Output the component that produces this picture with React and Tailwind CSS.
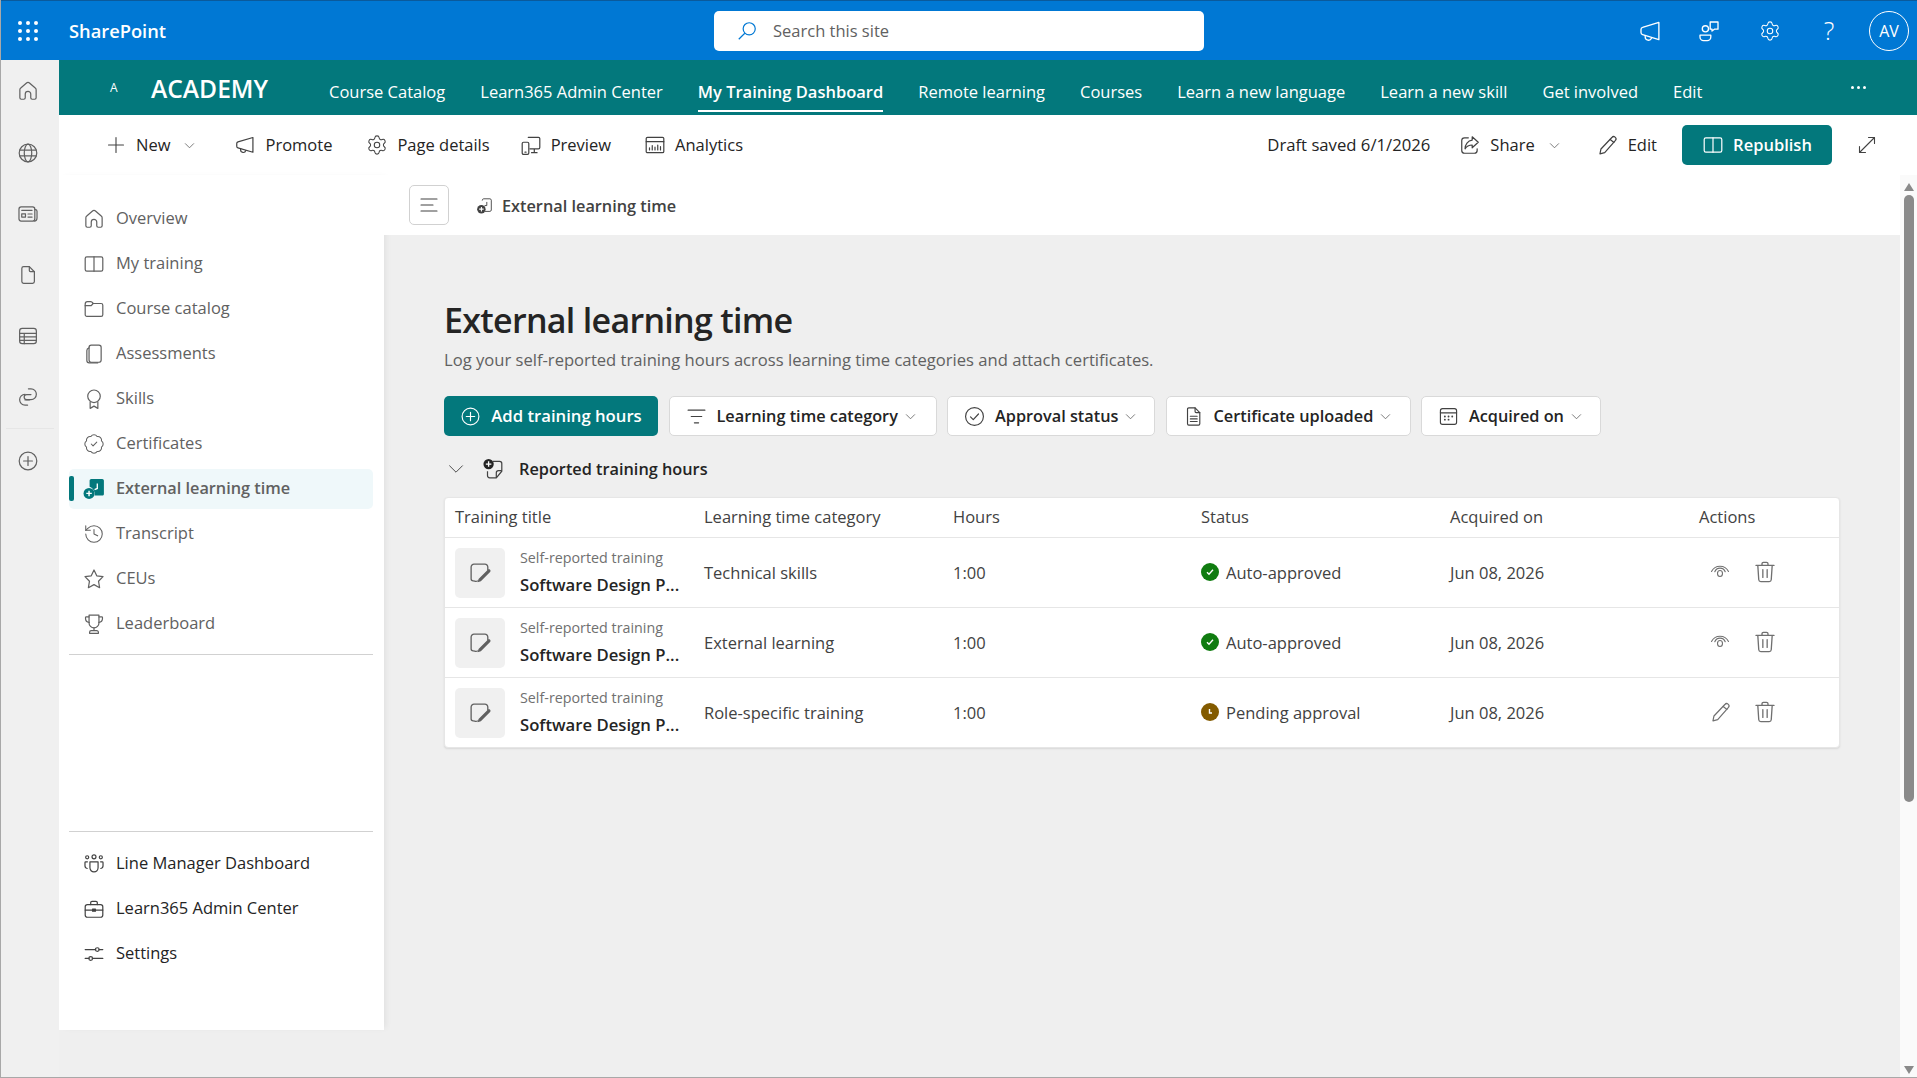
import { useState } from "react";
import { Settings, BadgeCheck, History as HistoryIcon } from "lucide-react";

const Ic = ({ size = 20, className = "", sw = 1.1, children, vb = 20 }) => (
  <svg width={size} height={size} viewBox={`0 0 ${vb} ${vb}`} fill="none" stroke="currentColor" strokeWidth={sw} strokeLinecap="round" strokeLinejoin="round" className={`shrink-0 ${className}`}>
    {children}
  </svg>
);

const Home = (p) => <Ic {...p}><path d="M8.4 2.9a2.4 2.4 0 0 1 3.2 0l5 4.3c.5.4.8 1 .8 1.7v7.3c0 .7-.6 1.3-1.3 1.3h-2.3c-.7 0-1.3-.6-1.3-1.3v-3.4a2.500 2.500 0 0 0-5 0v3.400c0 .7-.6 1.300-1.300 1.300H3.900c-.7 0-1.300-.6-1.300-1.300V8.900c0-.7.3-1.300.8-1.700z" /></Ic>;
const Globe = (p) => <Ic {...p}><circle cx="10" cy="10" r="8" /><ellipse cx="10" cy="10" rx="3.400" ry="8" /><path d="M2.400 7.400h15.200M2.400 12.600h15.200" /></Ic>;
const News = (p) => <Ic {...p}><rect x="1.800" y="3.600" width="14.400" height="12.800" rx="2" /><path d="M16.200 6h.4c.9 0 1.600.7 1.600 1.600v5.800c0 1.700-1 3-2.600 3" /><rect x="4.300" y="9.800" width="3.400" height="3" /><path d="M4.300 6.700h9.400M10 10h3.700M10 12.800h3.700" /></Ic>;
const FileI = (p) => <Ic {...p}><path d="M6 2.400h5.200L15.800 7v9c0 .9-.7 1.600-1.600 1.600H6c-.9 0-1.600-.7-1.600-1.600V4c0-.9.7-1.600 1.600-1.600z" /><path d="M11.200 2.400V6c0 .6.4 1 1 1h3.600" /></Ic>;
const Lists = (p) => <Ic {...p}><rect x="2.400" y="3" width="15.200" height="14" rx="2.400" /><path d="M2.400 7.600h15.200M2.400 10.800h15.200M2.400 14h15.200M6.600 7.600V17" /></Ic>;
const Loop = (p) => <Ic {...p}><path d="M10.400 2.600h2.300a4.900 4.900 0 0 1 0 9.800H8.800a2.300 2.300 0 0 1 0-4.600h3.900" /><path d="M9.600 17.400H7.300a4.900 4.900 0 0 1 0-9.800" /><path d="M7.300 12.700h3.900" /></Ic>;
const PlusCircle = (p) => <Ic {...p}><circle cx="10" cy="10" r="8" /><path d="M10 6v8M6 10h8" /></Ic>;
const Plus = (p) => <Ic {...p}><path d="M10 2.500v15M2.500 10h15" /></Ic>;
const Chevron = ({ size = 11, className = "" }) => <Ic size={size} className={className} vb={12} sw={0.9}><path d="M1.500 4l4.500 4.500L10.500 4" /></Ic>;
const Megaphone = (p) => <Ic {...p}><path d="M17.200 3.200v13.400L3.600 12.600c-.7-.2-1.100-.8-1.100-1.500V8.700c0-.7.4-1.300 1.100-1.500z" /><path d="M6 13.200v1.200a2.400 2.400 0 0 0 4.700.7" /></Ic>;
const Gear = ({ size = 20, className = "" }) => <Settings size={size} strokeWidth={1.15} className={`shrink-0 ${className}`} />;
const Preview = (p) => <Ic {...p}><path d="M7.500 3h9.300c.7 0 1.200.5 1.200 1.200v8.100c0 .7-.5 1.200-1.200 1.200H9M13 13.500v3.500M10.500 17h5" /><rect x="2" y="7.500" width="6" height="11" rx="1.200" /><path d="M4.500 16.500h1" /></Ic>;
const Analytics = (p) => <Ic {...p}><rect x="2" y="3" width="16" height="14" rx="1.200" /><path d="M2 7h16M5 14.500v-2M7.500 14.500v-4M10 14.500v-2.500M12.500 14.500V10M15 14.500v-3" /></Ic>;
const Share = (p) => <Ic {...p}><path d="M8.500 3.500H5c-1.400 0-2.500 1.100-2.500 2.500v9c0 1.400 1.100 2.500 2.500 2.500h9c1.400 0 2.500-1.100 2.500-2.500v-1.500" /><path d="M12 2.500l5.500 5-5.500 5V10c-3 0-5 1-6.500 3.500C5.500 9.500 8 6 12 5.500z" /></Ic>;
const Pencil = (p) => <Ic {...p}><path d="M13.500 3.200a2.100 2.100 0 0 1 3.300 2.600L7 17l-4.300 1 .9-4.400z" /><path d="M12 5l3.400 2.700" /></Ic>;
const BookI = (p) => <Ic {...p}><rect x="2" y="3.500" width="16" height="13" rx="1.500" /><path d="M10 3.500v13" /></Ic>;
const Expand = (p) => <Ic {...p}><path d="M11.500 2.500h6v6M17.500 2.500l-15 15M2.500 11.500v6h6" /></Ic>;
const Speak = (p) => <Ic {...p}><path d="M17.400 2.800v14.400L3.800 13c-.8-.2-1.300-.9-1.300-1.700V8.700c0-.8.500-1.500 1.300-1.700z" /><path d="M6 14v1a2.700 2.700 0 0 0 5.200 1" /></Ic>;
const Chat = (p) => <Ic {...p}><circle cx="7" cy="8.200" r="2.600" /><path d="M2.500 13.500h9v1.500a3 3 0 0 1-3 3h-3a3 3 0 0 1-3-3z" /><path d="M11 2.500h6.500v6h-3l-2 1.500V8.500H11z" /></Ic>;
const Folder = (p) => <Ic {...p}><path d="M2 5.500C2 4.100 2.800 3.200 4 3.200h2.800c.6 0 1 .2 1.400.6l1 1.200H16.500c.8 0 1.500.7 1.500 1.500v8.700c0 .8-.7 1.500-1.500 1.500h-13c-.8 0-1.500-.7-1.500-1.500z" /><path d="M2 7h5.500l1.700-2" /></Ic>;
const Pages = (p) => <Ic {...p}><rect x="5.500" y="2" width="11" height="15.500" rx="2" /><path d="M5.500 4.500c-1 .3-2 1-2 2.300v9c0 1.300 1 2.200 2.200 2.200h7.800" /></Ic>;
const Ribbon = (p) => <Ic {...p}><circle cx="10" cy="7.500" r="5.700" /><path d="M6.500 12.500v6l3.500-2 3.500 2v-6" /></Ic>;
const Cert = ({ size = 20, className = "" }) => <BadgeCheck size={size} strokeWidth={1.15} className={`shrink-0 ${className}`} />;
const History = ({ size = 20, className = "" }) => <HistoryIcon size={size} strokeWidth={1.15} className={`shrink-0 ${className}`} />;
const Star = (p) => <Ic {...p}><path d="M10 1.800l2.500 5.300 5.700.8-4.100 4.100 1 5.900-5.100-2.800-5.100 2.800 1-5.900L1.800 7.900l5.700-.8z" /></Ic>;
const Trophy = (p) => <Ic {...p}><path d="M5.500 2h9v7a4.500 4.500 0 0 1-9 0z" /><path d="M5.500 3.500H3a.7.7 0 0 0-.7.7V5a3.500 3.500 0 0 0 3.300 3.500M14.500 3.500H17c.4 0 .7.3.7.7V5a3.500 3.500 0 0 1-3.300 3.500M10 13.500V16M6 18.500v-1a1.500 1.500 0 0 1 1.500-1.500h5a1.500 1.500 0 0 1 1.500 1.500v1z" /></Ic>;
const Team = (p) => <Ic {...p}><circle cx="10" cy="3.500" r="1.800" /><circle cx="3.800" cy="3.900" r="1.400" /><circle cx="16.200" cy="3.900" r="1.400" /><path d="M6.300 8h7.400v5.500a3.700 3.700 0 0 1-7.400 0zM4 8H2.500c-.4 0-.7.3-.7.7v3c0 1.200.9 2.200 2 2.400M16 8h1.500c.4 0 .7.3.7.7v3c0 1.200-.9 2.200-2 2.400" /></Ic>;
const Briefcase = (p) => <Ic {...p}><rect x="2" y="6" width="16" height="11.500" rx="2" /><path d="M7 6V4.200C7 3.500 7.500 3 8.200 3h3.600c.7 0 1.200.5 1.200 1.200V6M2 11h6.500M11.500 11H18" /><rect x="8.700" y="10" width="2.600" height="2" fill="currentColor" /></Ic>;
const Sliders = (p) => <Ic {...p}><path d="M2 6h9.500M14.500 6H18M2 14h3.500M8.500 14H18" /><circle cx="13" cy="6" r="1.700" /><circle cx="7" cy="14" r="1.700" /></Ic>;
const MenuLines = (p) => <Ic {...p}><path d="M2 4h16M2 10h12M2 16h16" /></Ic>;
const Funnel = (p) => <Ic {...p}><path d="M2 4h16M5 10h10M8 16h4" /></Ic>;
const CheckCircle = (p) => <Ic {...p}><circle cx="10" cy="10" r="8.500" /><path d="M6.200 10.300l2.600 2.600 5-5.300" /></Ic>;
const Doc = (p) => <Ic {...p}><path d="M5.500 1.800h6L16 6.300V17c0 .7-.5 1.200-1.200 1.200H5.500c-.7 0-1.200-.5-1.200-1.200V3c0-.7.5-1.200 1.200-1.200z" /><path d="M11.500 1.800v3.500c0 .6.4 1 1 1H16M7 9.800h6.500M7 12.300h6.500M7 14.800h6.500" /></Ic>;
const Calendar = (p) => <Ic {...p}><rect x="2.300" y="2.500" width="15.400" height="15" rx="2" /><path d="M2.300 6.500h15.400" /><path d="M6.500 10h.1M10 10h.1M13.500 10h.1M6.500 13h.1M10 13h.1" strokeWidth="1.700" /></Ic>;
const Eye = (p) => <Ic {...p}><path d="M1.500 9.500a9.500 9.500 0 0 1 17 0" /><path d="M4.800 9.800a5.500 5.500 0 0 1 10.400 0" /><ellipse cx="10" cy="11.500" rx="2.500" ry="3" /></Ic>;
const Trash = (p) => <Ic {...p}><path d="M2.500 4.500h15M7.500 4.500V3.200c0-.7.5-1.200 1.200-1.200h2.600c.7 0 1.200.5 1.200 1.200v1.300M4 4.500l.8 12c.1 1 .9 1.500 1.700 1.500h7c.8 0 1.600-.5 1.700-1.500l.8-12M8.200 8v6.500M11.800 8v6.500" /></Ic>;
const NoteEdit = (p) => <Ic {...p}><path d="M16.500 7.500V5c0-1.300-1-2.400-2.400-2.400H5c-1.300 0-2.400 1.100-2.400 2.400v9.800c0 .9.7 1.700 1.700 1.700 1.400 0 2 1 3.500.2" /><path d="M18.400 9.100l-7.700 7.700-2.700.9.800-2.700 7.700-7.700c.5-.5 1.400-.5 1.900 0s.5 1.300 0 1.800z" fill="currentColor" stroke="none" /></Ic>;
const LearnTime = ({ size = 20, className = "", fill = false }) => (
  <svg width={size} height={size} viewBox="0 0 20 20" className={`shrink-0 ${className}`} fill="none">
    {fill ? (
      <>
        <path d="M6 2.500c0-.8.7-1.500 1.500-1.500h10c.8 0 1.500.7 1.500 1.500v12c0 .8-.7 1.500-1.500 1.500h-7A7 7 0 0 0 6 8z" fill="#03787c" />
        <path d="M13 5v4.500l-2.500 1" stroke="#fff" strokeWidth="1.200" />
        <circle cx="5.500" cy="14" r="5" fill="#03787c" />
        <path d="M5.500 11.500v5M3 14h5" stroke="#fff" strokeWidth="1.300" />
      </>
    ) : (
      <>
        <path d="M7 4V3.500C7 2.700 7.700 2 8.500 2h7c.8 0 1.500.7 1.500 1.500v11c0 .8-.7 1.500-1.500 1.500H10" stroke="currentColor" />
        <path d="M12 5.500v4H9.500" stroke="currentColor" />
        <circle cx="6" cy="13.500" r="4.700" fill="currentColor" />
        <path d="M6 11v5M3.500 13.500h5" stroke="#fff" strokeWidth="1.200" />
      </>
    )}
  </svg>
);
const Reported = () => (
  <svg width={22} height={22} viewBox="0 0 20 20" fill="none" className="shrink-0">
    <path d="M10 3h6c1 0 2 1 2 2v7l-5 6H7c-1 0-2-1-2-2v-4" stroke="#424242" strokeWidth="1.100" />
    <path d="M18 11.500h-3c-1.200 0-2 .8-2 2V18" stroke="#424242" strokeWidth="1.100" />
    <circle cx="6" cy="5.500" r="4.700" fill="#242424" />
    <path d="M6 3v5M3.500 5.500h5" stroke="#fff" strokeWidth="1.200" />
  </svg>
);

const topNav = [
  ["Course Catalog", false],
  ["Learn365 Admin Center", false],
  ["My Training Dashboard", true],
  ["Remote learning", false],
  ["Courses", false],
  ["Learn a new language", false],
  ["Learn a new skill", false],
  ["Get involved", false],
  ["Edit", false],
];

const sideItems = [
  [Home, "Overview"],
  [BookI, "My training"],
  [Folder, "Course catalog"],
  [Pages, "Assessments"],
  [Ribbon, "Skills"],
  [Cert, "Certificates"],
  [null, "External learning time"],
  [History, "Transcript"],
  [Star, "CEUs"],
  [Trophy, "Leaderboard"],
];

const rows = [
  { cat: "Technical skills", status: "Auto-approved", ok: true },
  { cat: "External learning", status: "Auto-approved", ok: true },
  { cat: "Role-specific training", status: "Pending approval", ok: false },
];

const FilterBtn = ({ icon: I, label, w }) => (
  <button className={`h-10 ${w} flex items-center pl-[16px] bg-white border border-[#d9d9d9] rounded-[5px] text-[#242424] text-[16.300px] font-semibold`}>
    <I size={21} className="text-[#424242]" />
    <span className="ml-[10px]">{label}</span>
    <Chevron size={11} className="ml-[7px] text-[#616161]" />
  </button>
);

const CmdBtn = ({ icon: I, label, ml }) => (
  <div className={`flex items-center ${ml}`}>
    <I size={22} className="text-[#424242]" />
    <span className="ml-[9px]">{label}</span>
  </div>
);

export default function App() {
  const [open] = useState(true);
  return (
    <div className="w-[1917px] h-[1078px] flex flex-col overflow-hidden bg-[#efefef] text-[16.500px] text-[#242424] border-l border-b border-[#a8a8a8] font-['Open_Sans','Noto_Sans',sans-serif]">
      <header className="h-[60px] shrink-0 flex items-center bg-[#0078d4] border-t border-[#0a5a9c] text-white">
        <div className="w-[713px] flex items-center shrink-0">
          <div className="w-[54px] flex justify-center">
            <div className="grid grid-cols-3 gap-[4px]">
              {Array.from({ length: 9 }).map((_, i) => (
                <span key={i} className="w-[4px] h-[4px] rounded-full bg-white" />
              ))}
            </div>
          </div>
          <span className="ml-[14px] text-[18.300px] font-semibold">SharePoint</span>
        </div>
        <div className="w-[490px] h-10 bg-white rounded-[5px] flex items-center pl-[22px] text-[#616161]">
          <svg width="22" height="22" viewBox="0 0 20 20" fill="none" stroke="#0078d4" strokeWidth="1.100" className="shrink-0">
            <circle cx="12" cy="8" r="5.500" />
            <path d="M8 12l-5.500 5.500" />
          </svg>
          <span className="ml-[15px] mt-[1px]">Search this site</span>
        </div>
        <div className="flex-1 flex items-center justify-end pr-[8px]">
          <Speak size={24} />
          <Chat size={24} className="ml-[35px]" />
          <Gear size={22} className="ml-[38px]" />
          <span className="ml-[37px] w-[22px] text-center text-[25px] font-light leading-none">?</span>
          <div className="ml-[29px] w-10 h-10 rounded-full border border-white flex items-center justify-center text-[16px]">AV</div>
        </div>
      </header>

      <div className="flex-1 flex min-h-0">
        <aside className="w-[58px] shrink-0 bg-[#f0f0f0] flex flex-col items-center text-[#616161] pt-[20px] pr-[4px]">
          <Home size={22} />
          <Globe size={22} className="mt-[40px]" />
          <News size={22} className="mt-[39px]" />
          <FileI size={22} className="mt-[39px]" />
          <Lists size={22} className="mt-[39px]" />
          <Loop size={22} className="mt-[39px]" />
          <div className="w-[48px] h-px bg-[#e6e6e6] mt-[20px] ml-[4px]" />
          <PlusCircle size={22} className="mt-[21px]" />
        </aside>

        <div className="flex-1 flex flex-col min-w-0 relative">
          <nav className="h-[55px] shrink-0 bg-[#03787c] text-white flex items-center">
            <span className="ml-[51px] w-[41px] text-[12px]">A</span>
            <span className="text-[24.600px] font-semibold w-[178px] leading-none mt-[3px]">ACADEMY</span>
            <div className="flex items-center gap-[35px] h-full pt-[9px]">
              {topNav.map(([label, active]) => (
                <span key={label} className={`h-full flex items-center relative ${active ? "font-semibold" : ""}`}>
                  {label}
                  {active && <span className="absolute left-0 right-0 bottom-[3px] h-[2px] bg-white" />}
                </span>
              ))}
            </div>
            <div className="ml-auto mr-[51px] flex gap-[3px]">
              <span className="w-[3px] h-[3px] rounded-full bg-white" />
              <span className="w-[3px] h-[3px] rounded-full bg-white" />
              <span className="w-[3px] h-[3px] rounded-full bg-white" />
            </div>
          </nav>

          <div className="h-[60px] shrink-0 bg-white flex items-center">
            <Plus size={20} className="ml-[47px] text-[#424242]" />
            <span className="ml-[10px]">New</span>
            <Chevron className="ml-[14px] text-[#616161]" />
            <CmdBtn icon={Megaphone} label="Promote" ml="ml-[39px]" />
            <CmdBtn icon={Gear} label="Page details" ml="ml-[34px]" />
            <CmdBtn icon={Preview} label="Preview" ml="ml-[30px]" />
            <CmdBtn icon={Analytics} label="Analytics" ml="ml-[33px]" />
            <span className="ml-auto text-[16.700px]">Draft saved 6/1/2026</span>
            <CmdBtn icon={Share} label="Share" ml="ml-[29px]" />
            <Chevron className="ml-[14px] text-[#616161]" />
            <CmdBtn icon={Pencil} label="Edit" ml="ml-[37px]" />
            <button className="ml-[25px] w-[150px] h-10 rounded-[5px] bg-[#03787c] text-white font-semibold flex items-center justify-center">
              <BookI size={22} />
              <span className="ml-[9px]">Republish</span>
            </button>
            <Expand size={20} className="ml-[25px] mr-[40px] text-[#424242]" />
          </div>

          <div className="flex-1 flex min-h-0">
            <div className="w-[325px] shrink-0 pb-[47px] flex flex-col">
              <div className="flex-1 bg-white flex flex-col pl-[10px] pr-[11px] pt-[21px] text-[#616161] shadow-[4px_0_6px_-2px_rgba(0,0,0,0.06)]">
                {sideItems.map(([I, label]) =>
                  I ? (
                    <div key={label} className="h-[45px] flex items-center pl-[14px]">
                      <I size={22} />
                      <span className="ml-[11px]">{label}</span>
                    </div>
                  ) : (
                    <div key={label} className="h-[40px] my-[2.500px] flex items-center bg-[#eff8fa] rounded-[5px] relative pl-[14px]">
                      <span className="absolute left-0 top-[7px] w-[5px] h-[25px] rounded-[2px] bg-[#03787c]" />
                      <LearnTime size={22} fill />
                      <span className="ml-[11px] font-semibold text-[16.300px]">{label}</span>
                    </div>
                  )
                )}
                <div className="h-px bg-[#d1d1d1] mt-[8px]" />
                <div className="flex-1" />
                <div className="h-px bg-[#d1d1d1]" />
                <div className="pt-[9px] pb-[54px] text-[#242424]">
                  {[[Team, "Line Manager Dashboard"], [Briefcase, "Learn365 Admin Center"], [Sliders, "Settings"]].map(([I, label]) => (
                    <div key={label} className="h-[45px] flex items-center pl-[14px]">
                      <I size={22} className="text-[#424242]" />
                      <span className="ml-[11px]">{label}</span>
                    </div>
                  ))}
                </div>
              </div>
            </div>

            <main className="flex-1 min-w-0 flex flex-col pr-[16px]">
              <div className="h-[60px] shrink-0 bg-white flex items-center pl-[25px] text-[#424242]">
                <button className="w-10 h-10 rounded-[5px] border border-[#d1d1d1] bg-white flex items-center justify-center">
                  <MenuLines size={20} />
                </button>
                <LearnTime size={18} className="ml-[27px] mt-[1px]" />
                <span className="ml-[8px] mt-[3px] font-semibold text-[16.300px]">External learning time</span>
              </div>

              <div className="flex-1 pl-[60px] pr-[60px] pt-[60px]">
                <h1 className="text-[34px] tracking-[-0.7px] font-semibold leading-[50px]">External learning time</h1>
                <p className="text-[#616161] text-[16.600px] leading-[24px] mt-[3px]">Log your self-reported training hours across learning time categories and attach certificates.</p>

                <div className="flex items-center gap-[10.500px] mt-[24px]">
                  <button className="h-10 w-[214px] rounded-[5px] bg-[#03787c] text-white font-semibold flex items-center justify-center text-[16.700px]">
                    <PlusCircle size={21} />
                    <span className="ml-[10px]">Add training hours</span>
                  </button>
                  <FilterBtn icon={Funnel} label="Learning time category" w="w-[268px]" />
                  <FilterBtn icon={CheckCircle} label="Approval status" w="w-[208px]" />
                  <FilterBtn icon={Doc} label="Certificate uploaded" w="w-[245px]" />
                  <FilterBtn icon={Calendar} label="Acquired on" w="w-[180px]" />
                </div>

                <div className="flex items-center h-[24px] mt-[21px] pl-[4px]">
                  <Ic size={16} sw={1}><path d="M2 6l8 8 8-8" /></Ic>
                  <span className="ml-[18px]"><Reported /></span>
                  <span className="ml-[15px] font-semibold text-[16.300px]">Reported training hours</span>
                </div>

                <div className="mt-[16px] w-[1396px] bg-white border border-[#e6e6e6] rounded-[4px] shadow-[0_1px_2px_rgba(0,0,0,0.1)]">
                  <div className="h-[39px] grid grid-cols-[249px_249px_248px_249px_249px_1fr] items-center pl-[10px] text-[#424242]">
                    {["Training title", "Learning time category", "Hours", "Status", "Acquired on", "Actions"].map((h) => (
                      <span key={h}>{h}</span>
                    ))}
                  </div>
                  {open && rows.map((r, i) => (
                    <div key={i} className="h-[70px] border-t border-[#e6e6e6] grid grid-cols-[249px_249px_248px_249px_249px_1fr] items-center pl-[10px] text-[#424242]">
                      <div className="flex items-center">
                        <div className="w-[50px] h-[50px] rounded-[5px] bg-[#f0f0f0] flex items-center justify-center text-[#616161]">
                          <NoteEdit size={24} />
                        </div>
                        <div className="ml-[15px] w-[170px]">
                          <div className="text-[14.300px] text-[#707070] leading-[20px] -mt-[1px]">Self-reported training</div>
                          <div className="font-semibold text-[16.700px] text-[#242424] leading-[24px] mt-[5px] whitespace-nowrap">Software Design P...</div>
                        </div>
                      </div>
                      <span className="mt-[2px]">{r.cat}</span>
                      <span className="mt-[2px]">1:00</span>
                      <div className="flex items-center mt-[2px]">
                        <span className={`w-[18px] h-[18px] -mt-[3px] rounded-full flex items-center justify-center ${r.ok ? "bg-[#107c10]" : "bg-[#835b00]"}`}>
                          <svg width="10" height="10" viewBox="0 0 10 10" fill="none" stroke="#fff" strokeWidth="1.400">
                            {r.ok ? <path d="M2 5.200l2 2 4-4.400" /> : <path d="M4.500 2v4h2.500" />}
                          </svg>
                        </span>
                        <span className="ml-[7px]">{r.status}</span>
                      </div>
                      <span className="mt-[2px]">Jun 08, 2026</span>
                      <div className="flex items-center pl-[11px] text-[#707070] -mt-[2px]">
                        {r.ok ? <Eye size={20} /> : <Pencil size={22} />}
                        <Trash size={24} className={r.ok ? "ml-[23px]" : "ml-[21px]"} />
                      </div>
                    </div>
                  ))}
                </div>
              </div>
            </main>
          </div>

          <div className="absolute right-0 top-[115px] bottom-0 w-[17px] bg-[#fafafa] flex flex-col items-center">
            <svg width="10" height="8" viewBox="0 0 10 8" className="mt-[8px]" fill="#8a8a8a"><path d="M5 0l5 8H0z" /></svg>
            <div className="w-[10px] h-[607px] mt-[4px] rounded-[5px] bg-[#8a8a8a]" />
            <svg width="10" height="8" viewBox="0 0 10 8" className="mt-auto mb-[3px]" fill="#8a8a8a"><path d="M5 8L0 0h10z" /></svg>
          </div>
        </div>
      </div>
    </div>
  );
}
